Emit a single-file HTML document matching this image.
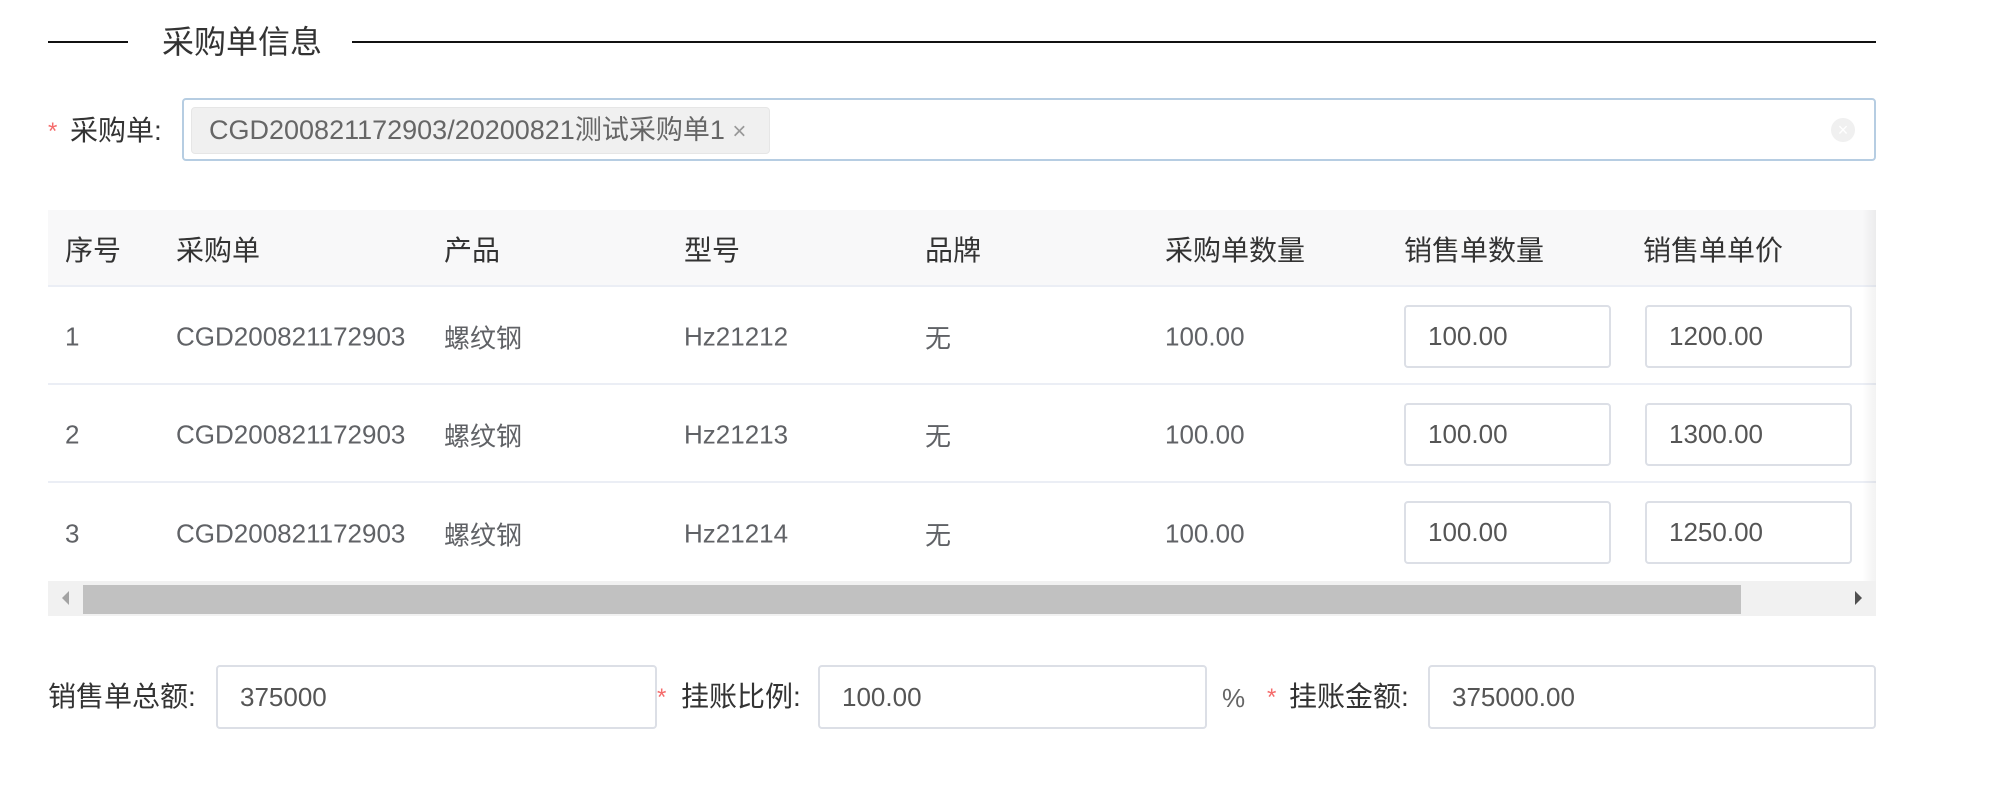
<!DOCTYPE html>
<html><head><meta charset="utf-8"><style>
*{box-sizing:border-box;margin:0;padding:0}
body{width:1995px;height:787px;background:#fff;position:relative;overflow:hidden;font-family:"Liberation Sans","Noto Sans CJK SC",sans-serif;color:#606266;font-size:26px}
.a{position:absolute;white-space:nowrap}
.line{position:absolute;height:2px;background:#111}
.inp{position:absolute;border:2px solid #dcdfe6;border-radius:4px;background:#fff;display:flex;align-items:center;padding-left:22px;color:#555;font-size:26px}
.hd{position:absolute;top:210px;height:77px;left:48px;width:1828px;background:#f8f8f9;border-bottom:2px solid #ebeef5}
.row{position:absolute;left:48px;width:1828px;height:98px;border-bottom:2px solid #ebeef5}
.c{position:absolute;top:52%;transform:translateY(-50%);white-space:nowrap}
.h{font-size:28px;color:#333}
.lb{position:absolute;line-height:32px;color:#333;font-size:28px;white-space:nowrap}
.req{color:#f56c6c !important}
</style></head><body>
<div class="line" style="left:48px;width:80px;top:41px"></div>
<div class="a" style="left:162px;top:20px;font-size:32px;color:#333;line-height:44px">采购单信息</div>
<div class="line" style="left:352px;width:1524px;top:41px"></div>

<div class="lb req" style="left:48px;top:116px;font-size:24px">*</div>
<div class="lb" style="left:70px;top:115px">采购单:</div>
<div class="a" style="left:182px;top:98px;width:1694px;height:63px;border:2px solid #b6cde2;border-radius:4px"></div>
<div class="a" style="left:191px;top:107px;width:579px;height:47px;background:#f0f0f0;border:1px solid #e6e6e6;border-radius:4px;line-height:45px;padding-left:17px;color:#666;font-size:27px">CGD200821172903/20200821测试采购单1 <span style="color:#999;font-size:24px">×</span></div>
<div class="a" style="left:1831px;top:118px;width:24px;height:24px;border-radius:50%;background:#f0f0f0;color:#fff;font-size:18px;line-height:24px;text-align:center">×</div>

<div class="hd">
<span class="c h" style="left:17px">序号</span><span class="c h" style="left:128px">采购单</span><span class="c h" style="left:396px">产品</span><span class="c h" style="left:636px">型号</span><span class="c h" style="left:877px">品牌</span><span class="c h" style="left:1117px">采购单数量</span><span class="c h" style="left:1356px">销售单数量</span><span class="c h" style="left:1595px">销售单单价</span>
</div>

<div class="row" style="top:287px"><span class="c" style="left:17px">1</span><span class="c" style="left:128px">CGD200821172903</span><span class="c" style="left:396px">螺纹钢</span><span class="c" style="left:636px">Hz21212</span><span class="c" style="left:877px">无</span><span class="c" style="left:1117px">100.00</span></div>
<div class="row" style="top:385px"><span class="c" style="left:17px">2</span><span class="c" style="left:128px">CGD200821172903</span><span class="c" style="left:396px">螺纹钢</span><span class="c" style="left:636px">Hz21213</span><span class="c" style="left:877px">无</span><span class="c" style="left:1117px">100.00</span></div>
<div class="row" style="top:483px;border-bottom:none"><span class="c" style="left:17px">3</span><span class="c" style="left:128px">CGD200821172903</span><span class="c" style="left:396px">螺纹钢</span><span class="c" style="left:636px">Hz21214</span><span class="c" style="left:877px">无</span><span class="c" style="left:1117px">100.00</span></div>

<div class="inp" style="left:1404px;top:305px;width:207px;height:63px">100.00</div>
<div class="inp" style="left:1645px;top:305px;width:207px;height:63px">1200.00</div>
<div class="inp" style="left:1404px;top:403px;width:207px;height:63px">100.00</div>
<div class="inp" style="left:1645px;top:403px;width:207px;height:63px">1300.00</div>
<div class="inp" style="left:1404px;top:501px;width:207px;height:63px">100.00</div>
<div class="inp" style="left:1645px;top:501px;width:207px;height:63px">1250.00</div>
<div class="a" style="left:1862px;top:210px;width:14px;height:371px;background:linear-gradient(to right,rgba(0,0,0,0),rgba(0,0,0,0.05))"></div>

<div class="a" style="left:48px;top:581px;width:1828px;height:35px;background:#f1f1f1"></div>
<div class="a" style="left:83px;top:585px;width:1658px;height:29px;background:#c1c1c1"></div>
<div class="a" style="left:62px;top:591px;width:0;height:0;border-top:7px solid transparent;border-bottom:7px solid transparent;border-right:7px solid #a3a3a3"></div>
<div class="a" style="left:1855px;top:591px;width:0;height:0;border-top:7px solid transparent;border-bottom:7px solid transparent;border-left:7px solid #505050"></div>

<div class="lb" style="left:48px;top:681px">销售单总额:</div>
<div class="inp" style="left:216px;top:665px;width:441px;height:64px">375000</div>
<div class="lb req" style="left:657px;top:682px;font-size:24px">*</div>
<div class="lb" style="left:681px;top:681px">挂账比例:</div>
<div class="inp" style="left:818px;top:665px;width:389px;height:64px">100.00</div>
<div class="lb" style="left:1222px;top:682px;color:#666;font-size:26px">%</div>
<div class="lb req" style="left:1267px;top:682px;font-size:24px">*</div>
<div class="lb" style="left:1289px;top:681px">挂账金额:</div>
<div class="inp" style="left:1428px;top:665px;width:448px;height:64px">375000.00</div>
</body></html>
